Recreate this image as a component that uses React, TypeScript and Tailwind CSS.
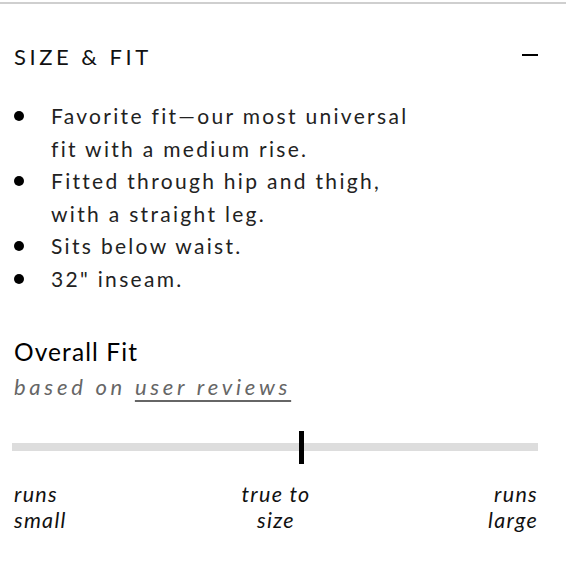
import React from "react";

const font = { fontFamily: "Lato, 'Noto Sans', sans-serif" };

export default function App() {
  const bullets = [
    ["Favorite fit—our most universal", "fit with a medium rise."],
    ["Fitted through hip and thigh,", "with a straight leg."],
    ["Sits below waist."],
    ['32" inseam.'],
  ];
  return (
    <div className="w-[580px] h-[580px] bg-white text-black overflow-hidden" style={font}>
      <div className="w-[566px] h-[2px] bg-[#cfcfcf] mt-[2px]" />
      <div className="flex items-center justify-between pl-[14px] pr-[42px] mt-[39px]">
        <h2 className="text-[22px] leading-[28px] tracking-[0.16em] text-[#111]">SIZE &amp; FIT</h2>
        <div className="w-[16px] h-[2px] bg-black -mt-[4px]" />
      </div>
      <ul className="mt-[29px] pl-[14px]">
        {bullets.map((b, i) => (
          <li key={i} className="flex">
            <span className="w-[37px] flex justify-start pt-[11px]">
              <span className="block w-[10px] h-[10px] rounded-full bg-black" />
            </span>
            <span className="text-[21px] leading-[32.5px] tracking-[0.11em] text-[#222]">
              {b.map((l, j) => (
                <div key={j}>{l}</div>
              ))}
            </span>
          </li>
        ))}
      </ul>
      <div className="pl-[14px] mt-[42px]">
        <div className="text-[24.5px] leading-[30px] text-black tracking-[0.045em]">Overall Fit</div>
        <div className="text-[22px] leading-[30px] italic tracking-[0.17em] text-[#666] mt-[5px]">
          based on <span className="underline underline-offset-[5px] decoration-[1.5px]">user reviews</span>
        </div>
      </div>
      <div className="relative ml-[12px] w-[526px] h-[8px] bg-[#dddddd] mt-[41px]">
        <div className="absolute left-[287px] top-[-12px] w-[5px] h-[33px] bg-black" />
      </div>
      <div className="grid grid-cols-3 pl-[14px] w-[538px] mt-[30px] text-[21.5px] leading-[26px] italic text-[#111] tracking-[0.06em]">
        <div className="text-left">runs<br />small</div>
        <div className="text-center">true to<br />size</div>
        <div className="text-right">runs<br />large</div>
      </div>
    </div>
  );
}
